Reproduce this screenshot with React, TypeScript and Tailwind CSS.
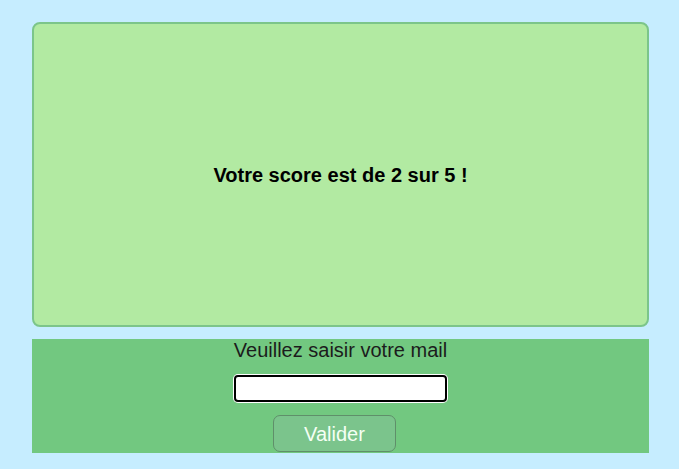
import * as React from "react";

export default function App() {
  return (
    <div
      className="min-h-[469px] w-full bg-[#c6edff] pt-[22px] pl-[32px]"
      style={{ fontFamily: '"Liberation Sans", Arial, sans-serif' }}
    >
      {/* Score card */}
      <div className="flex h-[305px] w-[617px] items-center justify-center rounded-[8px] border-2 border-[#7cc58a] bg-[#b2eaa2]">
        <p className="text-[20px] font-bold text-black">Votre score est de 2 sur 5 !</p>
      </div>

      {/* Mail form */}
      <div className="mt-[12px] flex h-[114px] w-[617px] flex-col items-center bg-[#72c880]">
        <label className="text-[20px] leading-[23px] text-[#1c1c1c]">Veuillez saisir votre mail</label>
        <input
          type="text"
          autoFocus
          className="mt-[13px] h-[27px] w-[213px] rounded-[4px] border-2 border-black bg-white px-[3px] text-[16px] shadow-[0_0_0_1px_#ffffff] outline-none"
        />
        <button className="mt-[13px] mr-[12px] h-[37px] w-[123px] rounded-[7px] border border-[#5f8f6a] bg-[#7bc48c] text-[20px] text-[#f4fff4]">
          Valider
        </button>
      </div>
    </div>
  );
}
